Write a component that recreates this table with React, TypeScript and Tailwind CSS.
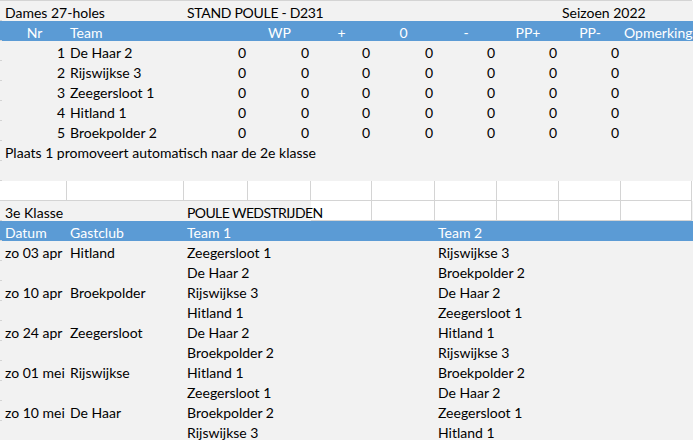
import React from "react";

type Cell = { t?: string; a?: "l" | "r" | "c"; k?: string };

const W = [
  "w-[65px]",
  "w-[117px]",
  "w-[64px]",
  "w-[63px]",
  "w-[61px]",
  "w-[63px]",
  "w-[62px]",
  "w-[62px]",
  "w-[62px]",
  "w-[71px]",
];

function alignCls(a?: string) {
  if (a === "r") return "justify-end pr-[2px]";
  if (a === "c") return "justify-center";
  return "justify-start pl-[3px]";
}

function Row({
  cells,
  kind = "gray",
  whiteFrom = 99,
  h = "h-[20px]",
}: {
  cells: Cell[];
  kind?: "gray" | "blue" | "white";
  whiteFrom?: number;
  h?: string;
}) {
  const base =
    kind === "blue"
      ? "bg-[#5b9bd5] text-white"
      : kind === "white"
      ? "bg-white text-black"
      : "bg-[#f2f2f2] text-black";
  return (
    <div className={`flex ${h} ${base}`}>
      <div className="w-[2px] shrink-0 border-b border-[#d4d4d4]" />
      {W.map((w, i) => {
        const c = cells[i] || {};
        const white = kind === "white" || i >= whiteFrom;
        return (
          <div
            key={i}
            className={`${w} shrink-0 flex items-end whitespace-nowrap overflow-visible ${alignCls(c.a)} ${
              white ? "bg-white border-r border-b border-[#d4d4d4]" : ""
            }`}
          >
            {c.t ? <span className={`relative z-10 leading-[16px] ${c.k || ""}`}>{c.t}</span> : null}
          </div>
        );
      })}
      <div className="flex-1" />
    </div>
  );
}

const teams = ["De Haar 2", "Rijswijkse 3", "Zeegersloot 1", "Hitland 1", "Broekpolder 2"];

const matches: [string, string, string, string][] = [
  ["zo 03 apr", "Hitland", "Zeegersloot 1", "Rijswijkse 3"],
  ["", "", "De Haar 2", "Broekpolder 2"],
  ["zo 10 apr", "Broekpolder", "Rijswijkse 3", "De Haar 2"],
  ["", "", "Hitland 1", "Zeegersloot 1"],
  ["zo 24 apr", "Zeegersloot", "De Haar 2", "Hitland 1"],
  ["", "", "Broekpolder 2", "Rijswijkse 3"],
  ["zo 01 mei", "Rijswijkse", "Hitland 1", "Broekpolder 2"],
  ["", "", "Zeegersloot 1", "De Haar 2"],
  ["zo 10 mei", "De Haar", "Broekpolder 2", "Zeegersloot 1"],
  ["", "", "Rijswijkse 3", "Hitland 1"],
];

export default function App() {
  return (
    <div className="w-[693px] h-[440px] overflow-hidden bg-[#f2f2f2] font-['Lato',sans-serif] text-[14px]">
      <Row cells={[]} kind="white" h="h-[1px]" />
      <Row
        cells={[
          { t: "Dames 27-holes" },
          {},
          { t: "STAND POULE - D231", k: "tracking-[-0.3px]" },
          {},
          {},
          {},
          {},
          {},
          { t: "Seizoen 2022" },
        ]}
      />
      <Row
        kind="blue"
        cells={[
          { t: "Nr", a: "c" },
          { t: "Team" },
          {},
          { t: "WP", a: "c" },
          { t: "+", a: "c" },
          { t: "0", a: "c" },
          { t: "-", a: "c" },
          { t: "PP+", a: "c" },
          { t: "PP-", a: "c" },
          { t: "Opmerking" },
        ]}
      />
      {teams.map((t, i) => (
        <Row
          key={t}
          cells={[
            { t: String(i + 1), a: "r" },
            { t },
            { t: "0", a: "r" },
            { t: "0", a: "r" },
            { t: "0", a: "r" },
            { t: "0", a: "r" },
            { t: "0", a: "r" },
            { t: "0", a: "r" },
            { t: "0", a: "r" },
          ]}
        />
      ))}
      <Row cells={[{ t: "Plaats 1 promoveert automatisch naar de 2e klasse" }]} />
      <Row cells={[]} />
      <Row cells={[]} kind="white" />
      <Row
        cells={[{ t: "3e Klasse" }, {}, { t: "POULE WEDSTRIJDEN", k: "tracking-[-0.6px]" }]}
        whiteFrom={4}
      />
      <Row
        kind="blue"
        cells={[{ t: "Datum" }, { t: "Gastclub" }, { t: "Team 1" }, {}, {}, {}, { t: "Team 2" }]}
      />
      {matches.map((m, i) => (
        <Row key={i} cells={[{ t: m[0] }, { t: m[1] }, { t: m[2] }, {}, {}, {}, { t: m[3] }]} />
      ))}
    </div>
  );
}
